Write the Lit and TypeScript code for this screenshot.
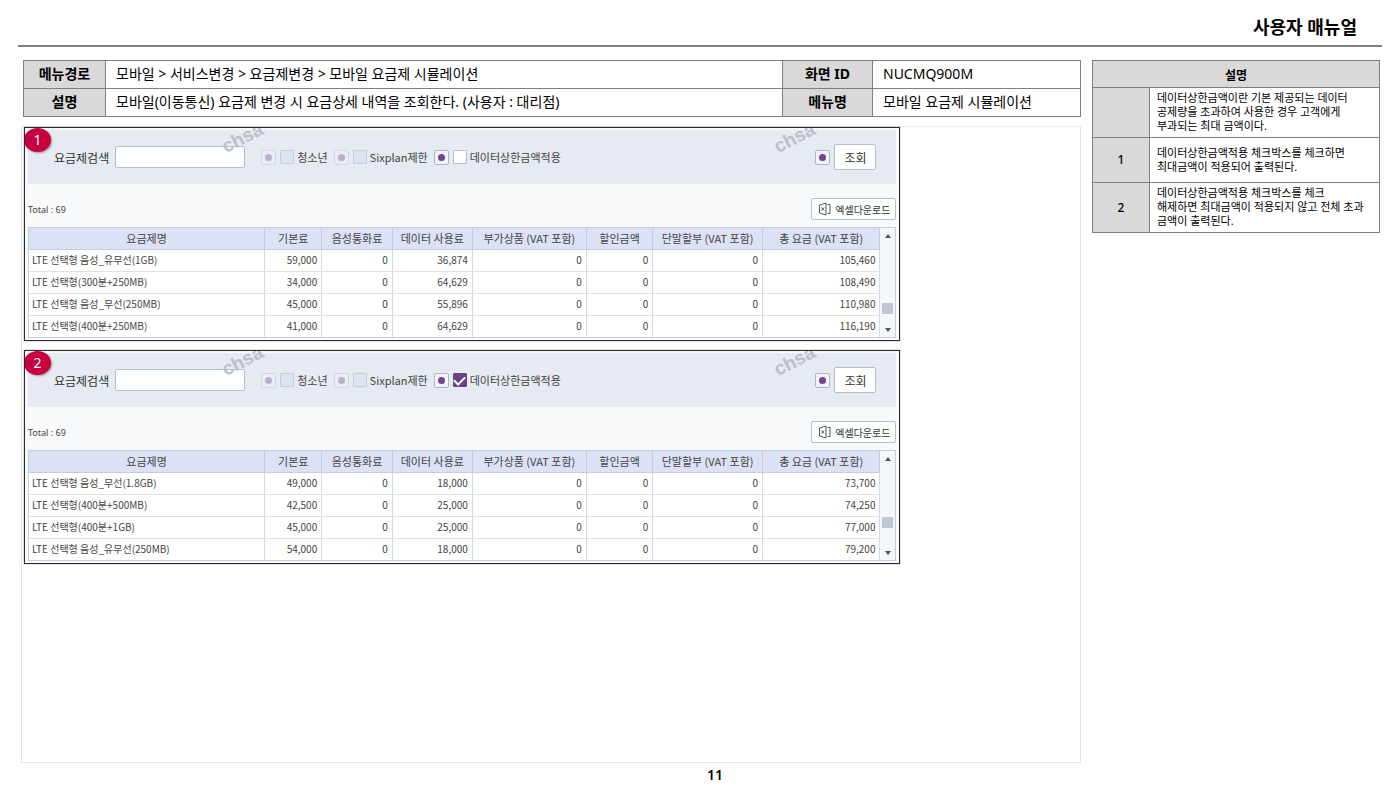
import { LitElement, html, css } from "lit";
import { customElement, property } from "lit/decorators.js";

interface Row {
  name: string;
  values: string[];
}

const COLUMNS = [
  "요금제명",
  "기본료",
  "음성통화료",
  "데이터 사용료",
  "부가상품 (VAT 포함)",
  "할인금액",
  "단말할부 (VAT 포함)",
  "총 요금 (VAT 포함)",
];

const row = (name: string, base: string, data: string, total: string): Row => ({
  name,
  values: [base, "0", data, "0", "0", "0", total],
});

const UNCAPPED: Row[] = [
  row("LTE 선택형 음성_유무선(1GB)", "59,000", "36,874", "105,460"),
  row("LTE 선택형(300분+250MB)", "34,000", "64,629", "108,490"),
  row("LTE 선택형 음성_무선(250MB)", "45,000", "55,896", "110,980"),
  row("LTE 선택형(400분+250MB)", "41,000", "64,629", "116,190"),
];

const CAPPED: Row[] = [
  row("LTE 선택형 음성_무선(1.8GB)", "49,000", "18,000", "73,700"),
  row("LTE 선택형(400분+500MB)", "42,500", "25,000", "74,250"),
  row("LTE 선택형(400분+1GB)", "45,000", "25,000", "77,000"),
  row("LTE 선택형 음성_유무선(250MB)", "54,000", "18,000", "79,200"),
];

@customElement("plan-panel")
export class PlanPanel extends LitElement {
  @property({ type: Number }) step = 1;
  @property({ type: Boolean }) capped = false;
  @property({ type: Number }) thumb = 0;
  @property({ attribute: false }) rows: Row[] = [];

  static styles = css`
    :host {
      display: block;
    }
    * {
      box-sizing: border-box;
    }
    .panel {
      position: relative;
      overflow: hidden;
      border: 1px solid #2b2b2b;
      box-shadow: 0 0 1px #555;
      background: #f8f9fb;
      padding: 2px 3px;
      color: #444;
      font-family: "Noto Sans CJK KR", sans-serif;
      font-size: 11px;
    }
    .badge {
      position: absolute;
      left: -1px;
      top: 0;
      width: 27px;
      height: 24px;
      border-radius: 50%;
      background: #c9003f;
      color: #fff;
      font-family: "Noto Sans", sans-serif;
      font-size: 14px;
      line-height: 23px;
      text-align: center;
      box-shadow: 1px 1px 2px rgba(0, 0, 0, 0.35);
    }
    .mark {
      position: absolute;
      top: -1px;
      color: #bcc0c8;
      font: bold 19px/22px "Liberation Sans", sans-serif;
      transform: rotate(-27deg);
      pointer-events: none;
    }
    .mark-left {
      left: 22.4%;
    }
    .mark-right {
      left: 85.5%;
    }
    .search {
      display: flex;
      align-items: center;
      height: 54px;
      padding: 0 20px 0 26px;
      background: #e6eaf1;
    }
    .search-label {
      color: #333;
      font-size: 12px;
    }
    .query {
      width: 130px;
      height: 22px;
      margin: 0 16px 0 6px;
      border: 1px solid #b4bfce;
      border-radius: 2px;
      background: #fff;
    }
    .option {
      display: flex;
      align-items: center;
      gap: 4px;
      margin-right: 6px;
    }
    .option label {
      display: flex;
      align-items: center;
      gap: 3px;
    }
    .dot {
      display: grid;
      place-items: center;
      width: 15px;
      height: 15px;
      border: 1px solid #a9b6cf;
      border-radius: 2px;
      background: #f2f4fa;
    }
    .dot::before {
      content: "";
      width: 7px;
      height: 7px;
      border-radius: 50%;
      background: #714587;
    }
    .dot-off {
      opacity: 0.35;
    }
    .check {
      appearance: none;
      display: grid;
      place-items: center;
      width: 14px;
      height: 14px;
      margin: 0;
      border: 1px solid #b4bfd4;
      border-radius: 1px;
      background: #fff;
    }
    .check:disabled {
      border-color: #c3cfdf;
      background: #dbe4ef;
    }
    .check:checked {
      border-color: #6d4182;
      background: #6d4182;
    }
    .check:checked::before {
      content: "";
      width: 9px;
      height: 5px;
      border: solid #fff;
      border-width: 0 0 2px 2px;
      transform: translateY(-1px) rotate(-45deg);
    }
    .run {
      display: flex;
      align-items: center;
      gap: 4px;
      margin-left: auto;
    }
    button {
      border: 1px solid #b4bfce;
      border-radius: 2px;
      background: #fff;
      color: #333;
      font-family: inherit;
      padding: 0;
    }
    .go {
      width: 42px;
      height: 26px;
      font-size: 12px;
    }
    .tools {
      display: flex;
      align-items: center;
      justify-content: space-between;
      height: 43px;
      padding-top: 7px;
      font-family: "Noto Sans", "Noto Sans CJK KR", sans-serif;
      font-size: 9px;
    }
    .excel {
      display: flex;
      align-items: center;
      gap: 4px;
      height: 22px;
      padding: 0 5px 0 6px;
      font-size: 10px;
    }
    .grid {
      display: flex;
      border: 1px solid #c5cddd;
      background: #fff;
    }
    table {
      flex: 1;
      min-width: 0;
      border-collapse: collapse;
      table-layout: fixed;
    }
    th,
    td {
      height: 22px;
      padding: 0 4px;
      border-right: 1px solid #d3dae6;
      border-bottom: 1px solid #dde2ec;
      line-height: 14px;
      white-space: nowrap;
    }
    tr:last-child td {
      border-bottom: 0;
    }
    th {
      height: 21px;
      background: #dde1f5;
      border-color: #c5cddd;
      font-weight: 400;
      padding: 0;
    }
    td {
      font-size: 10px;
      text-align: right;
    }
    .name {
      text-align: left;
      padding: 0 3px;
    }
    .c0 { width: 27.7%; }
    .c1 { width: 6.7%; }
    .c2 { width: 8.3%; }
    .c3 { width: 9.4%; }
    .c4 { width: 13.4%; }
    .c5 { width: 7.8%; }
    .c6 { width: 12.9%; }
    .c7 { width: 13.8%; }
    .scroll {
      display: flex;
      flex-direction: column;
      align-items: center;
      justify-content: space-between;
      width: 15px;
      padding: 6px 0 5px;
      background: #f5f7fa;
      position: relative;
    }
    .thumb {
      position: absolute;
      left: 2px;
      width: 11px;
      height: 11px;
      background: #bfc8d5;
    }
  `;

  private option(id: string, text: string, off: boolean) {
    return html`<div class="option">
      <span class="dot ${off ? "dot-off" : ""}"></span>
      <label for=${id}
        ><input
          class="check"
          id=${id}
          type="checkbox"
          ?disabled=${off}
          .checked=${!off && this.capped}
        />${text}</label
      >
    </div>`;
  }

  render() {
    return html`
      <section class="panel">
        <div class="search">
          <label class="search-label" for="query">요금제검색</label>
          <input class="query" id="query" type="text" />
          ${this.option("teen", "청소년", true)}
          ${this.option("six", "Sixplan제한", true)}
          ${this.option("cap", "데이터상한금액적용", false)}
          <div class="run">
            <span class="dot"></span>
            <button class="go" type="button">조회</button>
          </div>
        </div>
        <div class="tools">
          <span>Total : 69</span>
          <button class="excel" type="button">
            <svg width="13" height="14" viewBox="0 0 13 14" fill="none" stroke="#555">
              <path d="M1.500 3 8 1v12l-6.500-2zM9.500 2.500H12v9H9.500M3.500 5.500l2.500 3M6 5.500l-2.500 3" />
            </svg>
            엑셀다운로드
          </button>
        </div>
        <div class="grid">
          <table>
            <thead>
              <tr>
                ${COLUMNS.map((c, i) => html`<th class="c${i}" scope="col">${c}</th>`)}
              </tr>
            </thead>
            <tbody>
              ${this.rows.map(
                (r) => html`<tr>
                  <td class="name">${r.name}</td>
                  ${r.values.map((v) => html`<td>${v}</td>`)}
                </tr>`
              )}
            </tbody>
          </table>
          <div class="scroll">
            <svg width="6" height="4" viewBox="0 0 6 4"><path d="M0 4 3 0l3 4z" fill="#555" /></svg>
            <span class="thumb" style="top:${this.thumb}%"></span>
            <svg width="6" height="4" viewBox="0 0 6 4"><path d="M0 0h6L3 4z" fill="#555" /></svg>
          </div>
        </div>
        <span class="mark mark-left">chsa</span>
        <span class="mark mark-right">chsa</span>
        <span class="badge">${this.step}</span>
      </section>
    `;
  }
}

@customElement("app-root")
export class AppRoot extends LitElement {
  static styles = css`
    :host {
      display: block;
      font-family: "Noto Sans", "Noto Sans CJK KR", sans-serif;
      color: #000;
      background: #fff;
    }
    * {
      box-sizing: border-box;
    }
    .page {
      display: flex;
      flex-direction: column;
      min-height: 100vh;
      padding: 0 18px;
    }
    .title {
      margin: 0;
      padding: 14px 25px 5px 0;
      border-bottom: 2px solid #7f7f7f;
      font-size: 18px;
      line-height: 26px;
      text-align: right;
    }
    .body {
      flex: 1;
      display: flex;
      gap: 11px;
      padding: 13px 2px 0 3px;
    }
    .main {
      flex: 1;
      min-width: 0;
      display: flex;
      flex-direction: column;
      gap: 9px;
    }
    table {
      border-collapse: collapse;
      table-layout: fixed;
    }
    th,
    td {
      border: 1px solid #7f7f7f;
    }
    th {
      background: #d9d9d9;
    }
    .info {
      margin-left: 2px;
      font-size: 14px;
      line-height: 20px;
    }
    .info th,
    .info td {
      height: 28px;
      padding: 0 10px 2px;
      text-align: left;
    }
    .info th {
      padding: 0 0 2px;
      text-align: center;
    }
    .key-a { width: 82px; }
    .key-b { width: 90px; }
    .val-b { width: 208px; }
    .frame {
      flex: 1;
      display: flex;
      flex-direction: column;
      gap: 9px;
      padding: 0 0 0 2px;
      border: 1px solid #e3e3e3;
      border-top-color: #ededed;
    }
    .frame plan-panel {
      width: 83%;
    }
    .side {
      width: 288px;
      flex: none;
    }
    .notes {
      width: 100%;
      font-size: 11px;
      line-height: 14px;
    }
    .num {
      width: 57px;
    }
    .notes th {
      font-weight: 500;
      font-size: 12px;
    }
    .notes .head {
      height: 27px;
      padding: 4px 0 0;
      font-weight: 700;
    }
    .notes td {
      padding: 3px 0 4px 7px;
      white-space: nowrap;
    }
    .notes .tall td {
      padding: 8px 0 8px 7px;
    }
    .foot {
      padding: 2px 0 3px;
      text-align: center;
      font-size: 14px;
      line-height: 20px;
      font-weight: 600;
      margin-left: 30px;
    }
  `;

  render() {
    return html`
      <div class="page">
        <h1 class="title">사용자 매뉴얼</h1>
        <div class="body">
          <main class="main">
            <table class="info">
              <colgroup>
                <col class="key-a" />
                <col />
                <col class="key-b" />
                <col class="val-b" />
              </colgroup>
              <tr>
                <th scope="row">메뉴경로</th>
                <td>모바일 &gt; 서비스변경 &gt; 요금제변경 &gt; 모바일 요금제 시뮬레이션</td>
                <th scope="row">화면 ID</th>
                <td>NUCMQ900M</td>
              </tr>
              <tr>
                <th scope="row">설명</th>
                <td>모바일(이동통신) 요금제 변경 시 요금상세 내역을 조회한다. (사용자 : 대리점)</td>
                <th scope="row">메뉴명</th>
                <td>모바일 요금제 시뮬레이션</td>
              </tr>
            </table>
            <div class="frame">
              <plan-panel .step=${1} .rows=${UNCAPPED} .thumb=${69}></plan-panel>
              <plan-panel .step=${2} .rows=${CAPPED} .thumb=${61} capped></plan-panel>
            </div>
          </main>
          <aside class="side">
            <table class="notes">
              <colgroup>
                <col class="num" />
                <col />
              </colgroup>
              <thead>
                <tr>
                  <th class="head" colspan="2">설명</th>
                </tr>
              </thead>
              <tbody>
                <tr>
                  <th></th>
                  <td>데이터상한금액이란 기본 제공되는 데이터<br />공제량을 초과하여 사용한 경우 고객에게<br />부과되는 최대 금액이다.</td>
                </tr>
                <tr class="tall">
                  <th scope="row">1</th>
                  <td>데이터상한금액적용 체크박스를 체크하면<br />최대금액이 적용되어 출력된다.</td>
                </tr>
                <tr>
                  <th scope="row">2</th>
                  <td>데이터상한금액적용 체크박스를 체크<br />해제하면 최대금액이 적용되지 않고 전체 초과<br />금액이 출력된다.</td>
                </tr>
              </tbody>
            </table>
          </aside>
        </div>
        <footer class="foot">11</footer>
      </div>
    `;
  }
}
